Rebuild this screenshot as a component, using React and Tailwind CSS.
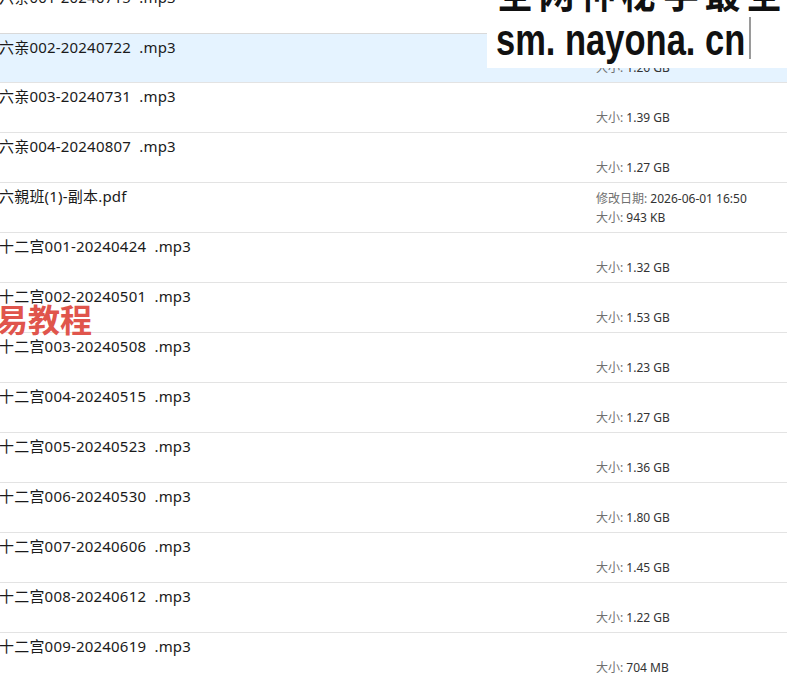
import React from "react";

const rows = [
  { name: "六亲001-20240715  .mp3", size: "1.26 GB" },
  { name: "六亲002-20240722  .mp3", size: "1.26 GB", selected: true },
  { name: "六亲003-20240731  .mp3", size: "1.39 GB" },
  { name: "六亲004-20240807  .mp3", size: "1.27 GB" },
  { name: "六親班(1)-副本.pdf", size: "943 KB", date: "2026-06-01 16:50" },
  { name: "十二宫001-20240424  .mp3", size: "1.32 GB" },
  { name: "十二宫002-20240501  .mp3", size: "1.53 GB" },
  { name: "十二宫003-20240508  .mp3", size: "1.23 GB" },
  { name: "十二宫004-20240515  .mp3", size: "1.27 GB" },
  { name: "十二宫005-20240523  .mp3", size: "1.36 GB" },
  { name: "十二宫006-20240530  .mp3", size: "1.80 GB" },
  { name: "十二宫007-20240606  .mp3", size: "1.45 GB" },
  { name: "十二宫008-20240612  .mp3", size: "1.22 GB" },
  { name: "十二宫009-20240619  .mp3", size: "704 MB" },
];

const font = { fontFamily: '"Noto Sans", "Noto Sans CJK SC", sans-serif' };

export default function App() {
  return (
    <div className="relative w-[787px] h-[675px] overflow-hidden bg-white" style={font}>
      <div className="-mt-[16px] flex flex-col">
        {rows.map((r, i) => (
          <div
            key={i}
            className={`h-[50px] flex border-b border-[#e3e3e3] ${
              r.selected ? "bg-[#e5f3ff] border-t border-t-[#d9d9d9] -mt-px" : ""
            }`}
          >
            <div className="flex-1 -ml-[1px] pt-[3px] text-[15px] tracking-[0.2px] leading-[20px] text-[#1a1a1a] whitespace-pre">
              {r.name}
            </div>
            <div className="w-[191px] flex flex-col justify-end pb-[5px] text-[12px] leading-[19px]">
              {r.date && (
                <div className="whitespace-pre">
                  <span className="text-[#707070]">修改日期: </span>
                  <span className="text-[#333]">{r.date}</span>
                </div>
              )}
              <div className="whitespace-pre">
                <span className="text-[#707070]">大小: </span>
                <span className="text-[#333]">{r.size}</span>
              </div>
            </div>
          </div>
        ))}
      </div>

      {/* watermark box top right */}
      <div className="absolute left-[487px] top-0 w-[300px] h-[68px] bg-white">
        <div
          className="absolute left-[10px] -top-[27px] text-[36px] leading-[40px] font-bold text-[#111] tracking-[5.5px] whitespace-nowrap scale-y-[1.2] origin-bottom"
          style={{ fontFamily: '"Noto Sans CJK SC", sans-serif' }}
        >
          全网神秘学最全
        </div>
        <div
          className="absolute left-[9px] top-[20px] text-[34.5px] leading-[40px] font-bold text-[#111] whitespace-pre scale-y-[1.27] origin-center"
          style={{ fontFamily: '"Liberation Sans", Arial, sans-serif' }}
        >
          sm. nayona. cn
        </div>
        <div className="absolute left-[262px] top-[17px] w-[2px] h-[42px] bg-[#9a9a9a]"></div>
      </div>

      {/* red watermark */}
      <div
        className="absolute -left-[4px] top-[298px] text-[32px] leading-[40px] font-bold text-[#e0554c] whitespace-nowrap"
        style={{ fontFamily: '"Noto Sans CJK SC", sans-serif' }}
      >
        易教程
      </div>
    </div>
  );
}
